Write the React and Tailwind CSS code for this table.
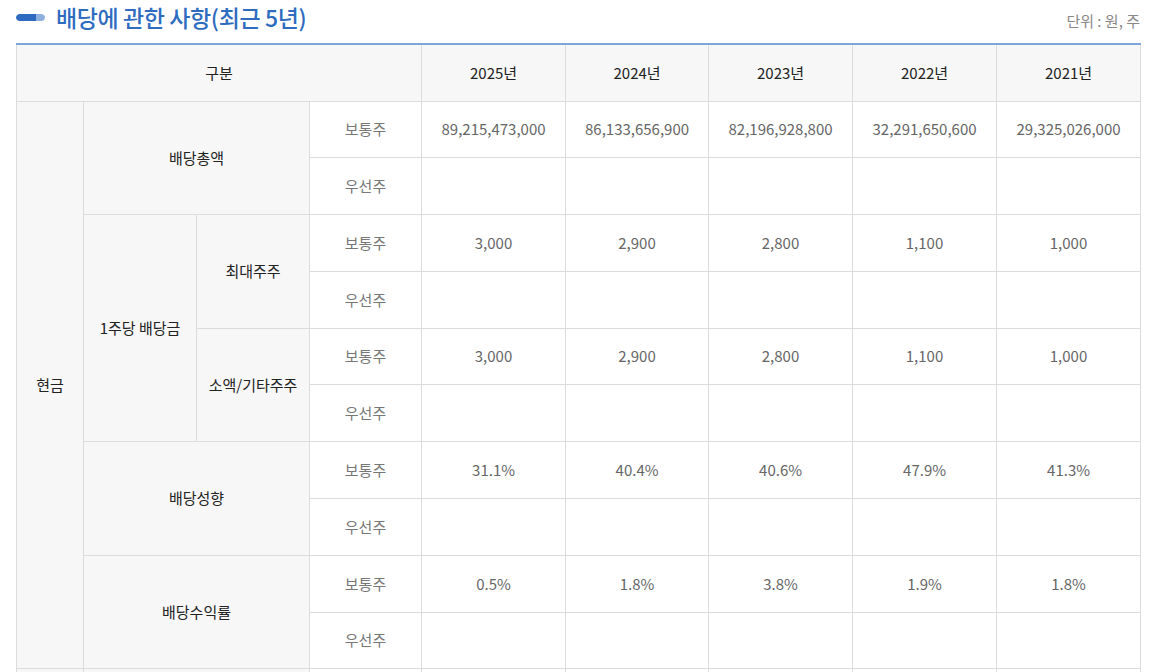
import React from "react";

const years = ["2025년", "2024년", "2023년", "2022년", "2021년"];

const rows = [
  { group: "배당총액", kind: "보통주", values: ["89,215,473,000", "86,133,656,900", "82,196,928,800", "32,291,650,600", "29,325,026,000"] },
  { kind: "우선주", values: ["", "", "", "", ""] },
  { sub: "최대주주", kind: "보통주", values: ["3,000", "2,900", "2,800", "1,100", "1,000"] },
  { kind: "우선주", values: ["", "", "", "", ""] },
  { sub: "소액/기타주주", kind: "보통주", values: ["3,000", "2,900", "2,800", "1,100", "1,000"] },
  { kind: "우선주", values: ["", "", "", "", ""] },
  { group: "배당성향", kind: "보통주", values: ["31.1%", "40.4%", "40.6%", "47.9%", "41.3%"] },
  { kind: "우선주", values: ["", "", "", "", ""] },
  { group: "배당수익률", kind: "보통주", values: ["0.5%", "1.8%", "3.8%", "1.9%", "1.8%"] },
  { kind: "우선주", values: ["", "", "", "", ""] },
];

const th = "border border-[#dcdcdc] bg-[#f7f7f7] text-[#222] font-normal text-center";
const td = "border border-[#dcdcdc] text-center";

const App = () => {
  return (
    <div
      className="w-[1150px] h-[672px] overflow-hidden bg-white px-4"
      style={{ fontFamily: '"Noto Sans CJK KR", "Noto Sans", sans-serif' }}
    >
      <div className="flex items-start justify-between h-[43px] -mr-[6px]">
        <div className="flex items-center gap-[11px] pt-[4px]">
          <span className="flex h-[7px] w-[29px] rounded-full overflow-hidden">
            <span className="h-full w-[20px] bg-[#2e6bc0] rounded-l-full" />
            <span className="h-full flex-1 bg-[#8fb0df] rounded-r-full" />
          </span>
          <h2 className="text-[23px] font-medium text-[#2f6cbf] leading-[26px] tracking-[-0.4px]">
            배당에 관한 사항(최근 5년)
          </h2>
        </div>
        <span className="text-[15px] text-[#888] leading-none pt-[13px]">단위 : 원, 주</span>
      </div>

      <table className="w-[1124px] table-fixed border-collapse border-t-2 border-t-[#7ea6d9] text-[15px]">
        <colgroup>
          <col className="w-[67px]" />
          <col className="w-[113px]" />
          <col className="w-[113px]" />
          <col className="w-[112px]" />
          <col className="w-[144px]" />
          <col className="w-[143px]" />
          <col className="w-[144px]" />
          <col className="w-[144px]" />
          <col className="w-[144px]" />
        </colgroup>
        <thead>
          <tr className="h-[57px]">
            <th colSpan={4} className={`${th} border-t-0`}>구분</th>
            {years.map((y) => (
              <th key={y} className={`${th} border-t-0`}>{y}</th>
            ))}
          </tr>
        </thead>
        <tbody>
          {rows.map((row, i) => (
            <tr key={i} className="h-[56.8px]">
              {i === 0 && (
                <td rowSpan={10} className={th}>현금</td>
              )}
              {row.group && (
                <td colSpan={2} rowSpan={2} className={th}>{row.group}</td>
              )}
              {i === 2 && (
                <td rowSpan={4} className={th}>1주당 배당금</td>
              )}
              {row.sub && (
                <td rowSpan={2} className={th}>{row.sub}</td>
              )}
              <td className={`${td} text-[#777]`}>{row.kind}</td>
              {row.values.map((v, j) => (
                <td key={j} className={`${td} text-[#666]`}>{v}</td>
              ))}
            </tr>
          ))}
          {/* next group starts just below the fold */}
          <tr className="h-[56.8px]">
            <td className={th}></td>
            <td colSpan={2} className={th}></td>
            <td className={td}></td>
            {years.map((y) => (
              <td key={y} className={td}></td>
            ))}
          </tr>
        </tbody>
      </table>
    </div>
  );
};

export default App;
